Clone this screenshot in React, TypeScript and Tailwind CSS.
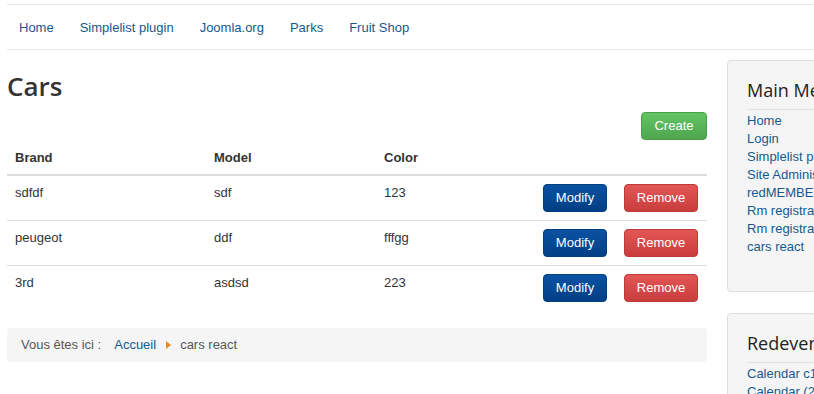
const navLinks = ["Home", "Simplelist plugin", "Joomla.org", "Parks", "Fruit Shop"];

const cars = [
  { brand: "sdfdf", model: "sdf", color: "123" },
  { brand: "peugeot", model: "ddf", color: "fffgg" },
  { brand: "3rd", model: "asdsd", color: "223" },
];

const mainMenu = [
  "Home",
  "Login",
  "Simplelist plugin",
  "Site Administrator",
  "redMEMBER",
  "Rm registration",
  "Rm registration form",
  "cars react",
];

export default function App() {
  return (
    <div className="w-screen h-screen overflow-hidden bg-white text-[13px] leading-[18px] text-[#333] font-['Liberation_Sans',Arial,sans-serif]">
      <div className="w-[940px] ml-[7px]">
        {/* top nav */}
        <nav className="mt-[4px] border-t border-b border-[#e8e8e8] h-[46px] flex items-center gap-[26px] pl-[12px] pt-[1px]">
          {navLinks.map((l) => (
            <a key={l} className="text-[#15598c] text-[13px]">
              {l}
            </a>
          ))}
        </nav>

        <div className="flex gap-[20px] mt-[10px]">
          {/* main column */}
          <main className="w-[700px]">
            <h1 className="font-['Open_Sans',sans-serif] font-semibold text-[26px] leading-[30px] text-[#333] mt-[11px]">
              Cars
            </h1>
            <div className="flex justify-end mt-[11px]">
              <button className="h-[28px] w-[66px] rounded-[4px] border border-[#4aa04a] bg-gradient-to-b from-[#62c462] to-[#4fa64f] text-white text-[13px]">
                Create
              </button>
            </div>
            <table className="w-full mt-[1px] border-collapse">
              <thead>
                <tr className="border-b-2 border-[#ddd] text-left">
                  <th className="w-[199px] pl-[8px] h-[34px] font-bold">Brand</th>
                  <th className="w-[170px] pl-[8px] font-bold">Model</th>
                  <th className="pl-[8px] font-bold">Color</th>
                  <th></th>
                </tr>
              </thead>
              <tbody>
                {cars.map((c, i) => (
                  <tr key={i} className={i < cars.length - 1 ? "border-b border-[#ddd]" : ""}>
                    <td className="pl-[8px] pt-[8px] align-top h-[45px]">{c.brand}</td>
                    <td className="pl-[8px] pt-[8px] align-top">{c.model}</td>
                    <td className="pl-[8px] pt-[8px] align-top">{c.color}</td>
                    <td className="align-top pt-[8px]">
                      <div className="flex justify-end gap-[17px] pr-[9px]">
                        <button className="h-[28px] w-[64px] rounded-[4px] border border-[#033e80] bg-gradient-to-b from-[#0a52a2] to-[#023f85] text-white text-[13px]">
                          Modify
                        </button>
                        <button className="h-[28px] w-[74px] rounded-[4px] border border-[#bd3a3a] bg-gradient-to-b from-[#e35656] to-[#c93d3d] text-white text-[13px]">
                          Remove
                        </button>
                      </div>
                    </td>
                  </tr>
                ))}
              </tbody>
            </table>

            {/* breadcrumb */}
            <div className="mt-[18px] h-[34px] rounded-[4px] bg-[#f5f5f5] flex items-center pl-[14px] text-[#555]">
              <span>Vous êtes ici :</span>
              <a className="ml-[13px] text-[#15598c]">Accueil</a>
              <svg className="ml-[10px] mr-[9px]" width="5" height="8" viewBox="0 0 5 8">
                <path d="M0 0 L5 4 L0 8 Z" fill="#f08a1c" />
              </svg>
              <span>cars react</span>
            </div>
          </main>

          {/* sidebar */}
          <aside className="w-[220px]">
            <div className="h-[232px] rounded-[4px] border border-[#ddd] bg-[#f5f5f5] px-[19px] pt-[17px]">
              <h3 className="font-['Open_Sans',sans-serif] font-normal text-[18px] leading-[24px] text-[#222] whitespace-nowrap pb-[7px] border-b border-[#e3e3e3]">
                Main Menu
              </h3>
              <ul className="mt-[2px]">
                {mainMenu.map((m) => (
                  <li key={m} className="text-[#15598c] whitespace-nowrap">
                    {m}
                  </li>
                ))}
              </ul>
            </div>
            <div className="mt-[21px] h-[120px] rounded-[4px] border border-[#ddd] bg-[#f5f5f5] px-[19px] pt-[17px]">
              <h3 className="font-['Open_Sans',sans-serif] font-normal text-[18px] leading-[24px] text-[#222] whitespace-nowrap pb-[7px] border-b border-[#e3e3e3]">
                Redevent
              </h3>
              <ul className="mt-[2px]">
                <li className="text-[#15598c] whitespace-nowrap">Calendar c1</li>
                <li className="text-[#15598c] whitespace-nowrap">Calendar (2)</li>
              </ul>
            </div>
          </aside>
        </div>
      </div>
    </div>
  );
}
